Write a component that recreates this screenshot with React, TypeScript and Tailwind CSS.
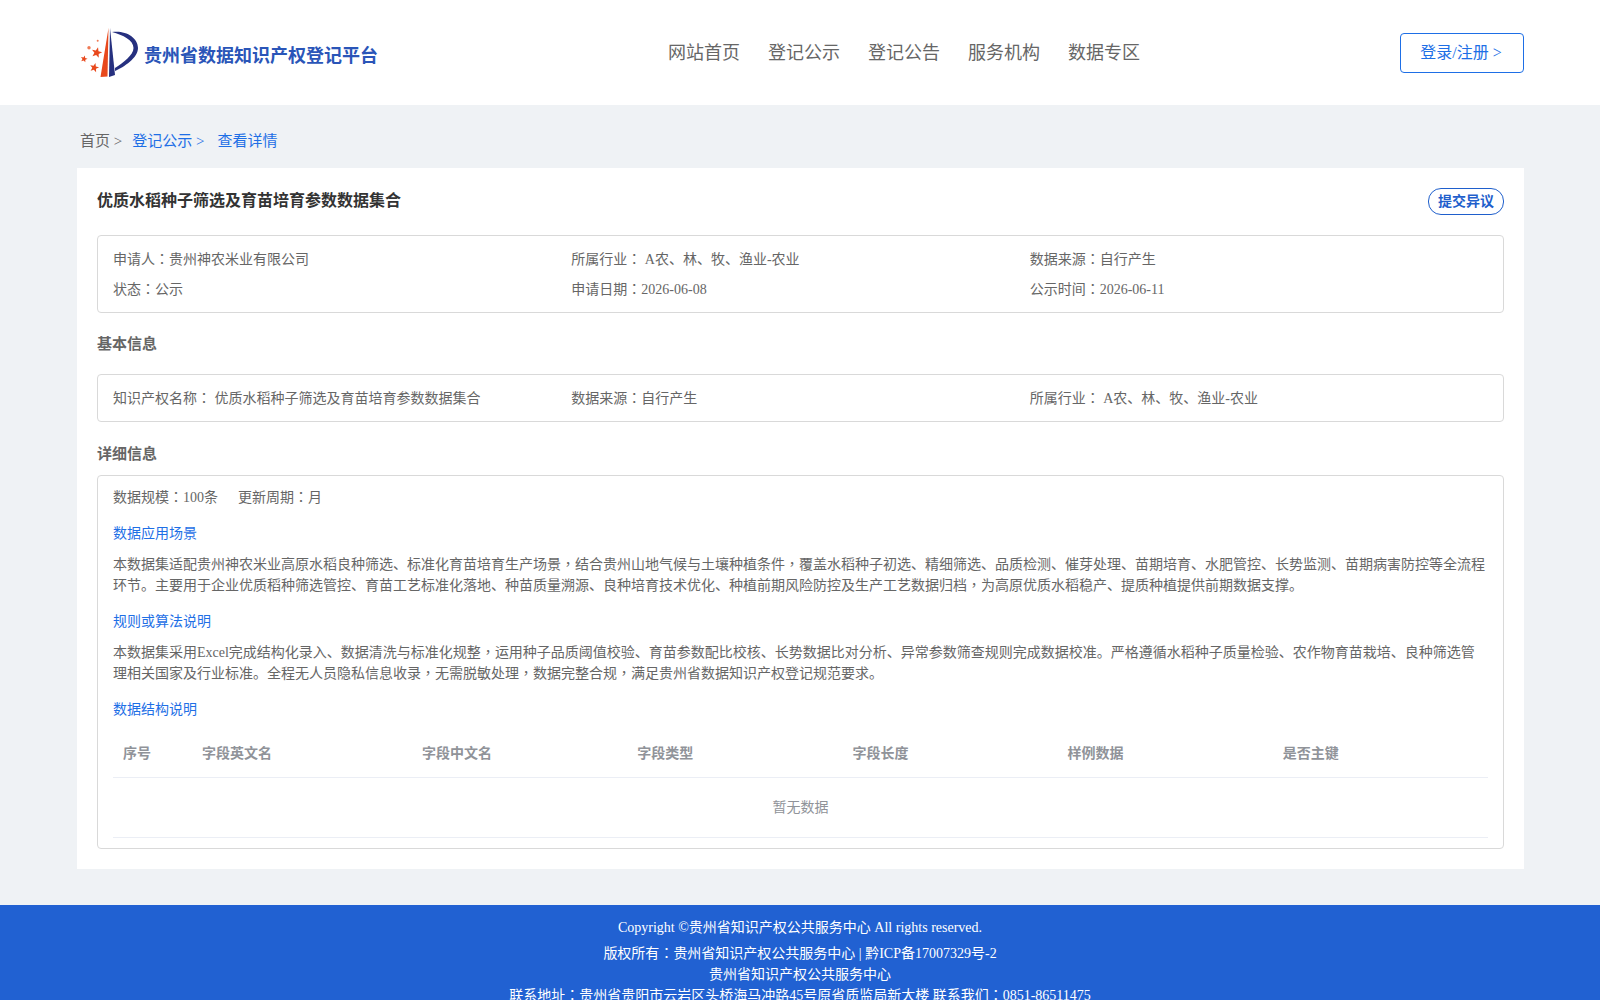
const navItems = ["网站首页", "登记公示", "登记公告", "服务机构", "数据专区"];
const columns = ["字段英文名", "字段中文名", "字段类型", "字段长度", "样例数据", "是否主键"];

function star(cx: number, cy: number, r: number) {
  const pts: string[] = [];
  for (let i = 0; i < 10; i++) {
    const rad = i % 2 === 0 ? r : r * 0.42;
    const a = ((i * 36 - 90 + 14) * Math.PI) / 180;
    pts.push(`${cx + rad * Math.cos(a)},${cy + rad * Math.sin(a)}`);
  }
  return pts.join(" ");
}

// the reference's CJK font centres ： and ， in their cell; the TC face does the same
function T({ children }: { children: string }) {
  return (
    <>
      {children.split(/([：，])/).map((part, i) =>
        part === "：" || part === "，" ? (
          <span key={i} className="font-['Noto_Sans_CJK_TC',serif] leading-[0]">{part}</span>
        ) : (
          part
        ),
      )}
    </>
  );
}

function Logo() {
  return (
    <svg width="60" height="55" viewBox="0 0 60 55" className="shrink-0">
      <path d="M28.5 3 L20.5 52 L27.5 51.5 Z" fill="#e8481c" />
      <path d="M30 3 L29 52 L35 50 Z" fill="#26307f" />
      <path d="M32 7 C45 5 58 12 58 23 C58 33 44 42 35 46 L35 43 C43 38 53.5 30 53.5 23 C53.5 15 43 10 32 7 Z" fill="#26307f" />
      <polygon points={star(16.7, 27.7, 5.5)} fill="#e8481c" />
      <polygon points={star(4, 34, 3.6)} fill="#e8481c" />
      <polygon points={star(14.3, 42.7, 4.8)} fill="#e8481c" />
      <circle cx="9" cy="22.7" r="1.7" fill="#ef7a55" />
      <circle cx="17.7" cy="15.7" r="1" fill="#ef7a55" />
    </svg>
  );
}

export default function App() {
  return (
    <div className="min-h-[1000px] bg-[#eff2f5] font-['Liberation_Serif','Noto_Sans_CJK_SC',serif] text-sm leading-[21px] text-[#666]">
      <header className="flex h-[105px] items-center bg-white pl-[80px] pr-[76px]">
        <div className="flex w-[588px] items-center">
          <Logo />
          <span className="ml-[4px] mt-[6px] text-lg font-bold text-[#2a55b8]">贵州省数据知识产权登记平台</span>
        </div>
        <nav className="flex gap-7 text-lg">
          {navItems.map((item) => (
            <a key={item} href="#" className="text-[#666]">{item}</a>
          ))}
        </nav>
        <a href="#" className="ml-auto flex h-10 w-[124px] items-center justify-center rounded border border-[#1e6fe6] pr-[2px] text-base text-[#1e6fe6]">
          登录/注册 &gt;
        </a>
      </header>

      <div className="flex h-[63px] pl-[80px] pt-[26px] text-[15px]">
        <span>首页 &gt;</span>
        <span className="ml-[10px] text-[#1e6fe6]">登记公示 &gt;</span>
        <span className="ml-[13px] text-[#1e6fe6]">查看详情</span>
      </div>

      <main className="ml-[77px] mr-[76px] bg-white p-5">
        <div className="flex items-start justify-between">
          <h1 className="mt-[1px] text-base font-bold text-[#333]">优质水稻种子筛选及育苗培育参数数据集合</h1>
          <button className="h-[27px] w-[76px] rounded-[13px] border border-[#1f5fcc] font-bold text-[#1f5fcc]">提交异议</button>
        </div>

        <div className="mt-5 grid grid-cols-3 gap-y-[9px] rounded border border-[#d9d9d9] px-[15px] pb-[12px] pt-[13px]">
          <div><T>申请人：贵州神农米业有限公司</T></div>
          <div><T>所属行业： A农、林、牧、渔业-农业</T></div>
          <div><T>数据来源：自行产生</T></div>
          <div><T>状态：公示</T></div>
          <div><T>申请日期：2026-06-08</T></div>
          <div><T>公示时间：2026-06-11</T></div>
        </div>

        <h2 className="mb-[19px] mt-[21px] text-[15px] font-bold">基本信息</h2>

        <div className="grid grid-cols-3 rounded border border-[#d9d9d9] px-[15px] pb-[12px] pt-[13px]">
          <div><T>知识产权名称： 优质水稻种子筛选及育苗培育参数数据集合</T></div>
          <div><T>数据来源：自行产生</T></div>
          <div><T>所属行业： A农、林、牧、渔业-农业</T></div>
        </div>

        <h2 className="mb-[10px] mt-[22px] text-[15px] font-bold">详细信息</h2>

        <div className="rounded border border-[#d9d9d9] px-[15px] pb-[10px] pt-[11px]">
          <div className="flex gap-5">
            <span><T>数据规模：100条</T></span>
            <span><T>更新周期：月</T></span>
          </div>

          <h3 className="mt-[15px] text-[#1e6fe6]">数据应用场景</h3>
          <p className="mt-[10px]">
            <T>本数据集适配贵州神农米业高原水稻良种筛选、标准化育苗培育生产场景，结合贵州山地气候与土壤种植条件，覆盖水稻种子初选、精细筛选、品质检测、催芽处理、苗期培育、水肥管控、长势监测、苗期病害防控等全流程环节。主要用于企业优质稻种筛选管控、育苗工艺标准化落地、种苗质量溯源、良种培育技术优化、种植前期风险防控及生产工艺数据归档，为高原优质水稻稳产、提质种植提供前期数据支撑。</T>
          </p>

          <h3 className="mt-[15px] text-[#1e6fe6]">规则或算法说明</h3>
          <p className="mt-[10px]">
            <T>本数据集采用Excel完成结构化录入、数据清洗与标准化规整，运用种子品质阈值校验、育苗参数配比校核、长势数据比对分析、异常参数筛查规则完成数据校准。严格遵循水稻种子质量检验、农作物育苗栽培、良种筛选管理相关国家及行业标准。全程无人员隐私信息收录，无需脱敏处理，数据完整合规，满足贵州省数据知识产权登记规范要求。</T>
          </p>

          <h3 className="mt-[15px] text-[#1e6fe6]">数据结构说明</h3>

          <div className="mt-[9px]">
            <div className="grid h-[49px] grid-cols-[79px_220px_repeat(5,1fr)] items-center border-b border-[#ebeef5] pt-[1px] font-bold text-[#909399]">
              <div className="px-[10px]">序号</div>
              {columns.map((col) => (
                <div key={col} className="px-[10px]">{col}</div>
              ))}
            </div>
            <div className="flex h-[60px] items-center justify-center border-b border-[#ebeef5] text-[#909399]">暂无数据</div>
          </div>
        </div>
      </main>

      <footer className="mt-[36px] bg-[#2161d2] pt-[12px] text-center text-white">
        <p className="mb-[5px]">Copyright ©贵州省知识产权公共服务中心 All rights reserved.</p>
        <p><T>版权所有：贵州省知识产权公共服务中心 | 黔ICP备17007329号-2</T></p>
        <p>贵州省知识产权公共服务中心</p>
        <p><T>联系地址：贵州省贵阳市云岩区头桥海马冲路45号原省质监局新大楼 联系我们：0851-86511475</T></p>
      </footer>
    </div>
  );
}
